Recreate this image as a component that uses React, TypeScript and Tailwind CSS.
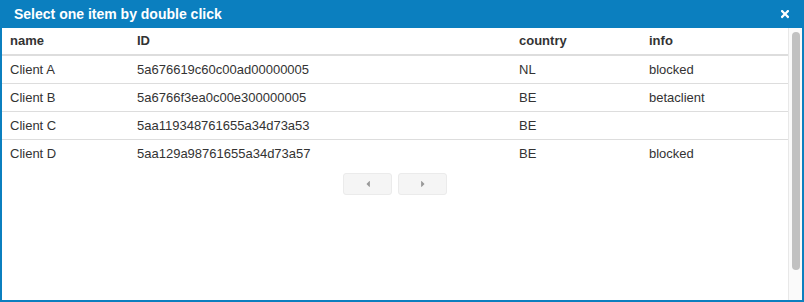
import React from "react";
import { FaTimes, FaCaretLeft, FaCaretRight } from "react-icons/fa";

const rows = [
  { name: "Client A", id: "5a676619c60c00ad00000005", country: "NL", info: "blocked" },
  { name: "Client B", id: "5a6766f3ea0c00e300000005", country: "BE", info: "betaclient" },
  { name: "Client C", id: "5aa119348761655a34d73a53", country: "BE", info: "" },
  { name: "Client D", id: "5aa129a98761655a34d73a57", country: "BE", info: "blocked" },
];

export default function App() {
  return (
    <div
      className="w-[804px] h-[302px] bg-[#0b7fbf] flex flex-col overflow-hidden"
      style={{ fontFamily: '"Liberation Sans", Arial, sans-serif' }}
    >
      <div className="h-[28px] flex items-center justify-between pl-[14px] pr-[13px] shrink-0">
        <span className="text-white font-bold text-[14px] leading-none">Select one item by double click</span>
        <FaTimes className="text-white w-[12px] h-[12px]" />
      </div>
      <div className="flex-1 mx-[2px] mb-[2px] bg-white flex min-h-0">
        <div className="flex-1 flex flex-col text-[13px] text-[#333]">
          <div className="h-[28px] flex items-center border-b-2 border-[#dddddd] font-bold">
            <div className="w-[127px] pl-[8px]">name</div>
            <div className="w-[382px] pl-[8px]">ID</div>
            <div className="w-[130px] pl-[8px]">country</div>
            <div className="flex-1 pl-[8px]">info</div>
          </div>
          {rows.map((r, i) => (
            <div
              key={r.name}
              className={`h-[28px] flex items-center ${i < rows.length - 1 ? "border-b border-[#dddddd]" : ""}`}
            >
              <div className="w-[127px] pl-[8px]">{r.name}</div>
              <div className="w-[382px] pl-[8px]">{r.id}</div>
              <div className="w-[130px] pl-[8px]">{r.country}</div>
              <div className="flex-1 pl-[8px]">{r.info}</div>
            </div>
          ))}
          <div className="flex justify-center gap-[6px] mt-[5px]">
            <div className="w-[49px] h-[22px] rounded-[3px] bg-[#f5f5f5] border border-[#ebebeb] flex items-center justify-center">
              <FaCaretLeft className="w-[10px] h-[10px] text-[#999]" />
            </div>
            <div className="w-[49px] h-[22px] rounded-[3px] bg-[#f5f5f5] border border-[#ebebeb] flex items-center justify-center">
              <FaCaretRight className="w-[10px] h-[10px] text-[#999]" />
            </div>
          </div>
        </div>
        <div className="w-[14px] bg-[#fafafa] border-l border-[#e8e8e8] flex justify-center pt-[4px]">
          <div className="w-[8px] h-[238px] rounded-full bg-[#c1c1c1]" />
        </div>
      </div>
    </div>
  );
}
